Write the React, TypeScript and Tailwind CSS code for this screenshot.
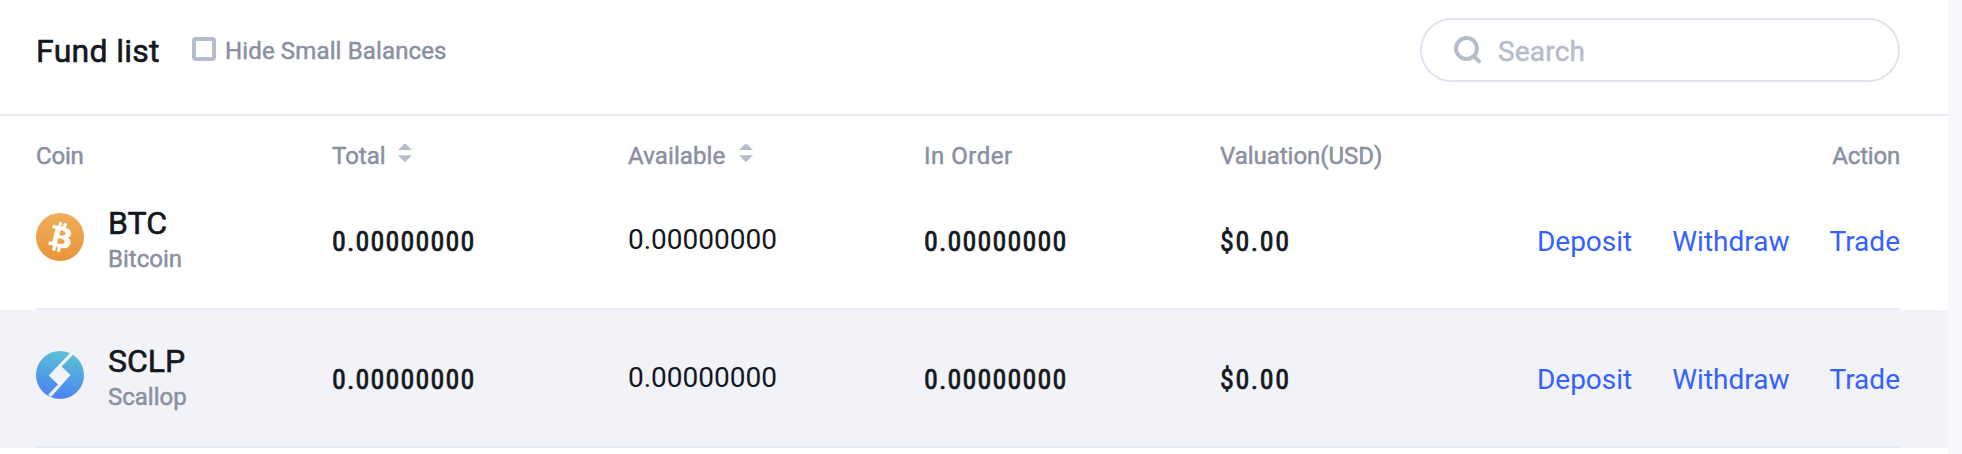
import React from "react";

function SortIcon() {
  return (
    <svg className="mt-[-7px] h-[20px] w-[14px]" viewBox="0 0 14 20" fill="#b7bccb">
      <path d="M0 7 6.2.9Q7 .2 7.8.9L14 7Z" />
      <path d="M0 12.3 6.2 18.4Q7 19.1 7.8 18.4L14 12.3Z" />
    </svg>
  );
}

function BtcIcon() {
  return (
    <svg className="h-12 w-12" viewBox="0 0 32 32">
      <defs>
        <linearGradient id="btc" x1="0" y1="0" x2="0" y2="1">
          <stop offset="0" stopColor="#efae5c" />
          <stop offset="1" stopColor="#e8953a" />
        </linearGradient>
      </defs>
      <circle cx="16" cy="16" r="16" fill="url(#btc)" />
      <path
        fill="#fff"
        stroke="#fff"
        strokeWidth="0.3"
        d="M23.189 14.02c.314-2.096-1.283-3.223-3.465-3.975l.708-2.84-1.728-.43-.69 2.765c-.454-.114-.92-.22-1.385-.326l.695-2.783L15.596 6l-.708 2.839c-.376-.086-.746-.17-1.104-.26l.002-.009-2.384-.595-.46 1.846s1.283.294 1.256.312c.7.175.826.638.805 1.006l-.806 3.235c.048.012.11.03.18.057l-.183-.045-1.13 4.532c-.086.212-.303.531-.793.41.018.025-1.256-.313-1.256-.313l-.858 1.978 2.25.561c.418.105.828.215 1.231.318l-.715 2.872 1.727.43.708-2.84c.472.127.93.245 1.378.357l-.706 2.828 1.728.43.715-2.866c2.948.558 5.164.333 6.097-2.333.752-2.146-.037-3.385-1.588-4.192 1.13-.26 1.98-1.003 2.207-2.538zm-3.95 5.538c-.533 2.147-4.148.986-5.32.695l.95-3.805c1.172.293 4.929.872 4.37 3.11zm.535-5.569c-.487 1.953-3.495.96-4.47.717l.86-3.45c.975.243 4.118.696 3.61 2.733z"
      />
    </svg>
  );
}

function SclpIcon() {
  return (
    <svg className="h-12 w-12" viewBox="0 0 48 48">
      <defs>
        <linearGradient id="sclp" x1="0.6" y1="0" x2="0.4" y2="1">
          <stop offset="0" stopColor="#5ac4d2" />
          <stop offset="1" stopColor="#4a80f6" />
        </linearGradient>
      </defs>
      <circle cx="24" cy="24" r="24" fill="url(#sclp)" />
      <path fill="#f2f3f9" d="M34.8 1.2 37.4 3.6 25.5 15.5 34.5 24 15 46 12.2 43.8 22 33.5 12.8 24.5Z" />
    </svg>
  );
}

const coins = [
  { symbol: "BTC", name: "Bitcoin", icon: <BtcIcon />, rowClass: "" },
  { symbol: "SCLP", name: "Scallop", icon: <SclpIcon />, rowClass: "bg-[#f2f3f9]" },
];

export default function App() {
  return (
    <div className="h-[454px] w-[1962px] overflow-hidden bg-[#f6f8fe] font-['Roboto',sans-serif] whitespace-nowrap text-[#15171e]">
      <div className="h-full w-[1948px] bg-white">
        <header className="flex h-[116px] items-start border-b-2 border-[#e7eaf1] pr-12 pl-9">
          <h1 className="mt-[31px] w-[156px] text-[32px] leading-10 tracking-[0.3px] [-webkit-text-stroke:0.6px]">Fund list</h1>
          <label className="mt-[37px] flex items-start">
            <span className="h-6 w-6 rounded-[4px] border-4 border-[#b7bccb]" />
            <span className="ml-[9px] text-2xl leading-7 tracking-[0.14px] text-[#8a90a2] [-webkit-text-stroke:0.5px]">Hide Small Balances</span>
          </label>
          <div className="mt-[18px] ml-auto flex h-16 w-[480px] items-center rounded-[32px] border-2 border-[#e0e4f2] pl-[31px]">
            <svg className="h-[30px] w-[30px]" viewBox="0 0 30 30" fill="none" stroke="#b7bccb" strokeWidth="4">
              <circle cx="13.5" cy="13.5" r="10.5" />
              <path d="m21 21.3 5 5" strokeLinecap="round" />
            </svg>
            <span className="mt-[3px] ml-[15px] text-[28px] leading-8 tracking-[0.2px] text-[#b7bccb] [-webkit-text-stroke:0.5px]">Search</span>
          </div>
        </header>

        <div className="grid h-14 grid-cols-[296px_296px_296px_296px_1fr] items-start pt-[25px] pr-12 pl-9 text-2xl leading-[30px] tracking-[0.12px] text-[#8a90a2] [-webkit-text-stroke:0.5px]">
          <span className="tracking-[-0.2px]">Coin</span>
          <span className="flex items-center gap-3 tracking-normal">Total<SortIcon /></span>
          <span className="flex items-center gap-[14px]">Available<SortIcon /></span>
          <span className="tracking-[0.5px]">In Order</span>
          <span className="flex justify-between">
            <span className="tracking-[-0.03px]">Valuation(USD)</span>
            <span className="tracking-[-0.2px]">Action</span>
          </span>
        </div>

        {coins.map((c) => (
          <div key={c.symbol} className={`h-[138px] pr-12 pl-9 ${c.rowClass}`}>
            <div className="grid h-full grid-cols-[296px_296px_296px_296px_1fr] items-start border-b-2 border-[#e7eaf1] text-[28px] leading-8">
              <div className="flex">
                <div className="mt-[41px]">{c.icon}</div>
                <div className="mt-[31px] ml-6">
                  <div className="text-[32px] leading-10 [-webkit-text-stroke:0.6px]">{c.symbol}</div>
                  <div className="text-2xl leading-8 text-[#8a90a2] [-webkit-text-stroke:0.5px]">{c.name}</div>
                </div>
              </div>
              <span className="mt-[54px] tracking-[1.17px] [font-stretch:75%] [-webkit-text-stroke:0.7px]">0.00000000</span>
              <span className="mt-[52px]">0.00000000</span>
              <span className="mt-[54px] tracking-[1.17px] [font-stretch:75%] [-webkit-text-stroke:0.7px]">0.00000000</span>
              <div className="mt-[54px] flex">
                <span className="tracking-[1.6px] [font-stretch:75%] [-webkit-text-stroke:0.7px]">$0.00</span>
                <div className="ml-auto flex gap-10 text-[#3461ff]">
                  <a>Deposit</a>
                  <a>Withdraw</a>
                  <a>Trade</a>
                </div>
              </div>
            </div>
          </div>
        ))}
      </div>
    </div>
  );
}
